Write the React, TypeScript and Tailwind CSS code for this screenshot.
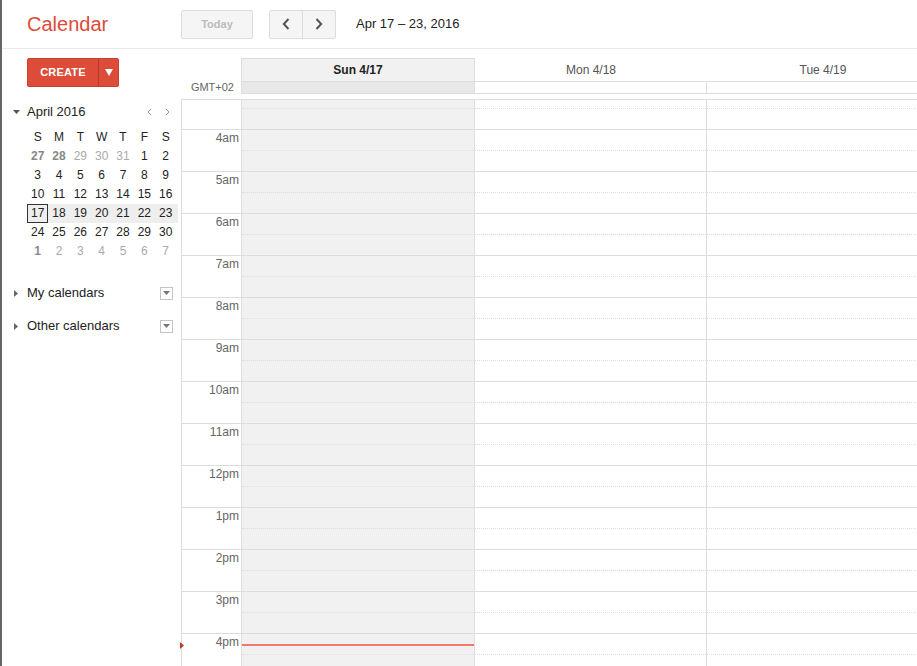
const weekdays = ["S", "M", "T", "W", "T", "F", "S"];

type Day = { n: number; tone: "cur" | "dim" | "dimBold" };

const weeks: Day[][] = [
  [
    { n: 27, tone: "dimBold" },
    { n: 28, tone: "dimBold" },
    { n: 29, tone: "dim" },
    { n: 30, tone: "dim" },
    { n: 31, tone: "dim" },
    { n: 1, tone: "cur" },
    { n: 2, tone: "cur" },
  ],
  [3, 4, 5, 6, 7, 8, 9].map((n) => ({ n, tone: "cur" as const })),
  [10, 11, 12, 13, 14, 15, 16].map((n) => ({ n, tone: "cur" as const })),
  [17, 18, 19, 20, 21, 22, 23].map((n) => ({ n, tone: "cur" as const })),
  [24, 25, 26, 27, 28, 29, 30].map((n) => ({ n, tone: "cur" as const })),
  [
    { n: 1, tone: "dimBold" },
    { n: 2, tone: "dim" },
    { n: 3, tone: "dim" },
    { n: 4, tone: "dim" },
    { n: 5, tone: "dim" },
    { n: 6, tone: "dim" },
    { n: 7, tone: "dim" },
  ],
];

const hours = ["4am", "5am", "6am", "7am", "8am", "9am", "10am", "11am", "12pm", "1pm", "2pm", "3pm", "4pm"];

// only the first three days fit in the window, the rest is cut off
const days = ["Sun 4/17", "Mon 4/18", "Tue 4/19"];

function Chevron({ dir }: { dir: "left" | "right" }) {
  return (
    <svg width="8" height="12" viewBox="0 0 8 12" fill="none">
      <path
        d={dir === "left" ? "M6.5 1 L1.8 6 L6.5 11" : "M1.5 1 L6.2 6 L1.5 11"}
        stroke="#555"
        strokeWidth="2"
      />
    </svg>
  );
}

function TinyChevron({ dir }: { dir: "left" | "right" }) {
  return (
    <svg width="5" height="8" viewBox="0 0 5 8" fill="none">
      <path d={dir === "left" ? "M4 1 L1 4 L4 7" : "M1 1 L4 4 L1 7"} stroke="#999" strokeWidth="1" />
    </svg>
  );
}

function CalendarToggle({ label }: { label: string }) {
  return (
    <div className="flex h-[20px] items-center pl-[12px] pr-[8px]">
      <svg width="4" height="7" viewBox="0 0 4 7" className="mr-[9px]">
        <polygon points="0,0 4,3.5 0,7" fill="#666" />
      </svg>
      <span className="text-[13px] text-[#222]">{label}</span>
      <div className="ml-auto flex h-[13px] w-[13px] items-center justify-center border border-[#c4c4c4] bg-white">
        <svg width="7" height="4" viewBox="0 0 7 4">
          <polygon points="0,0 7,0 3.5,4" fill="#777" />
        </svg>
      </div>
    </div>
  );
}

function DayCells({ first }: { first?: boolean }) {
  const top = first ? "h-[8px]" : "h-[20px]";
  return (
    <>
      {days.map((d, i) => (
        <div
          key={d}
          className={
            i === 0
              ? "flex w-[233px] shrink-0 flex-col border-r border-[#ddd] bg-[#f1f1f1]"
              : "flex w-[232px] shrink-0 flex-col border-r border-[#ddd]"
          }
        >
          <div className={top} />
          <div className="flex-1 border-t border-dotted border-[#ddd]" />
        </div>
      ))}
      <div className="flex min-w-0 flex-1 flex-col">
        <div className={top} />
        <div className="flex-1 border-t border-dotted border-[#ddd]" />
      </div>
    </>
  );
}

export default function App() {
  return (
    <div className="flex h-[666px] w-[917px] flex-col overflow-hidden border-l-2 border-[#666] bg-white font-['Liberation_Sans',Arial,sans-serif] text-[#222]">
      {/* top bar */}
      <div className="flex h-[49px] shrink-0 items-center border-b border-[#ebebeb]">
        <div className="w-[179px] shrink-0 pl-[25px] text-[20px] leading-[24px] text-[#dd4b39]">Calendar</div>
        <button className="h-[29px] w-[72px] rounded-[2px] border border-[#dcdcdc] bg-[#f5f5f5] text-[11px] font-bold text-[#bbb]">
          Today
        </button>
        <div className="ml-[16px] flex h-[29px] w-[67px] rounded-[2px] border border-[#dcdcdc] bg-[#f5f5f5]">
          <div className="flex flex-1 items-center justify-center border-r border-[#dcdcdc]">
            <Chevron dir="left" />
          </div>
          <div className="flex flex-1 items-center justify-center">
            <Chevron dir="right" />
          </div>
        </div>
        <div className="ml-[20px] text-[13px] text-[#222]">Apr 17 – 23, 2016</div>
      </div>

      <div className="flex min-h-0 flex-1">
        {/* sidebar */}
        <div className="w-[179px] shrink-0">
          <div className="ml-[25px] mt-[9px] flex h-[29px] w-[92px] rounded-[2px] border border-[#c8402f] bg-[#dd4b39]">
            <div className="flex flex-1 items-center justify-center text-[11px] font-bold tracking-[0.2px] text-white">
              CREATE
            </div>
            <div className="flex w-[20px] items-center justify-center border-l border-[#b93a2a]">
              <svg width="8" height="7" viewBox="0 0 8 7">
                <polygon points="0,0 8,0 4,7" fill="#fff" />
              </svg>
            </div>
          </div>

          <div className="mt-[16px] flex h-[18px] items-center pl-[11px] pr-[5px]">
            <svg width="7" height="4" viewBox="0 0 7 4" className="mr-[7px]">
              <polygon points="0,0 7,0 3.5,4" fill="#555" />
            </svg>
            <span className="text-[13px] text-[#222]">April 2016</span>
            <div className="ml-auto flex">
              <div className="flex w-[18px] justify-center">
                <TinyChevron dir="left" />
              </div>
              <div className="flex w-[18px] justify-center">
                <TinyChevron dir="right" />
              </div>
            </div>
          </div>

          <div className="mt-[7px] pl-[25px]">
            <div className="grid w-[151px] grid-cols-[repeat(7,21.33px)_2px] text-center text-[12px] leading-[19px]">
              {weekdays.map((w, i) => (
                <div key={i} className="h-[19px] text-[#222]">
                  {w}
                </div>
              ))}
            </div>
            {weeks.map((wk, wi) => (
              <div
                key={wi}
                className={
                  wi === 3
                    ? "grid w-[151px] grid-cols-[repeat(7,21.33px)_2px] bg-[#eee] text-center text-[12px] leading-[19px]"
                    : "grid w-[151px] grid-cols-[repeat(7,21.33px)_2px] text-center text-[12px] leading-[19px]"
                }
              >
                {wk.map((d, di) => (
                  <div
                    key={di}
                    className={
                      wi === 3 && di === 0
                        ? "h-[19px] border border-[#333] bg-[#eee] leading-[17px] text-[#222]"
                        : d.tone === "cur"
                        ? "h-[19px] text-[#222]"
                        : d.tone === "dimBold"
                        ? "h-[19px] font-bold text-[#888]"
                        : "h-[19px] text-[#aaa]"
                    }
                  >
                    {d.n}
                  </div>
                ))}
                <div />
              </div>
            ))}
          </div>

          <div className="mt-[22px]">
            <CalendarToggle label="My calendars" />
          </div>
          <div className="mt-[13px]">
            <CalendarToggle label="Other calendars" />
          </div>
        </div>

        {/* week grid */}
        <div className="flex min-w-0 flex-1 flex-col pt-[9px]">
          <div className="mb-[5px] flex shrink-0">
            <div className="flex w-[60px] shrink-0 items-end justify-end pr-[7px]">
              <span className="text-[11px] leading-[13px] text-[#666]">GMT+02</span>
            </div>
            {days.map((d, i) =>
              i === 0 ? (
                <div key={d} className="w-[234px] shrink-0 border-x border-t border-[#ddd] bg-[#f1f1f1]">
                  <div className="flex h-[23px] items-center justify-center border-b border-[#ddd] text-[12px] font-bold text-[#222]">
                    {d}
                  </div>
                  <div className="h-[12px] border-b border-[#ddd] bg-[#e8e8e8]" />
                </div>
              ) : (
                <div key={d} className="w-[232px] shrink-0">
                  <div className="flex h-[24px] items-center justify-center border-b border-[#ddd] text-[12px] text-[#555]">
                    {d}
                  </div>
                  <div className="h-[12px] border-b border-r border-[#ddd]" />
                </div>
              )
            )}
            <div className="min-w-0 flex-1">
              <div className="h-[24px] border-b border-[#ddd]" />
              <div className="h-[12px] border-b border-[#ddd]" />
            </div>
          </div>

          <div className="flex flex-col">
            <div className="flex h-[30px] shrink-0 border-t border-[#ddd]">
              <div className="w-[61px] shrink-0 border-x border-[#ddd]" />
              <DayCells first />
            </div>
            {hours.map((h) => (
              <div key={h} className="relative flex h-[42px] shrink-0 border-t border-[#ddd]">
                <div className="w-[61px] shrink-0 border-x border-[#ddd] pr-[2px] pt-[1px] text-right text-[12px] leading-[14px] text-[#666]">
                  {h}
                </div>
                <DayCells />
                {h === "4pm" && (
                  <>
                    <div className="absolute left-[61px] top-[10px] h-[2px] w-[232px] bg-[#f4776a]" />
                    <svg width="4" height="7" viewBox="0 0 4 7" className="absolute left-[-1px] top-[8px]">
                      <polygon points="0,0 4,3.5 0,7" fill="#c0392b" />
                    </svg>
                  </>
                )}
              </div>
            ))}
          </div>
        </div>
      </div>
    </div>
  );
}
